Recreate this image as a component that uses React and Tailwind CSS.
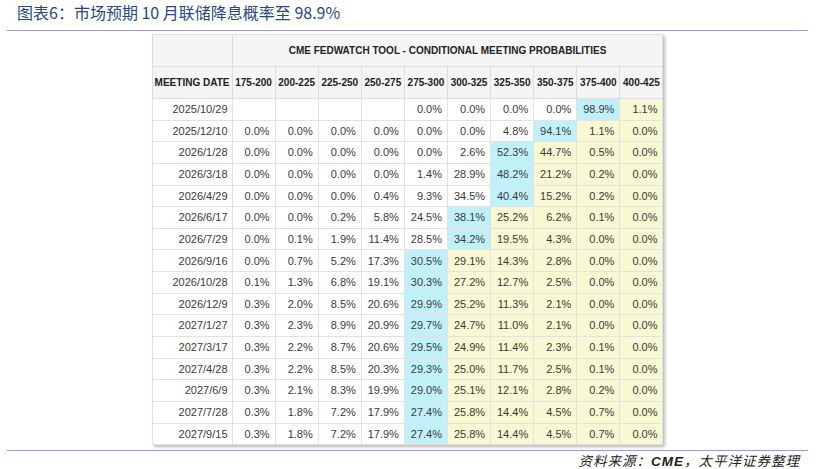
import React from "react";

const cols = ["175-200","200-225","225-250","250-275","275-300","300-325","325-350","350-375","375-400","400-425"];

const rows = [
  ["2025/10/29", ["","","","","0.0%","0.0%","0.0%","0.0%","98.9%","1.1%"], 8],
  ["2025/12/10", ["0.0%","0.0%","0.0%","0.0%","0.0%","0.0%","4.8%","94.1%","1.1%","0.0%"], 7],
  ["2026/1/28", ["0.0%","0.0%","0.0%","0.0%","0.0%","2.6%","52.3%","44.7%","0.5%","0.0%"], 6],
  ["2026/3/18", ["0.0%","0.0%","0.0%","0.0%","1.4%","28.9%","48.2%","21.2%","0.2%","0.0%"], 6],
  ["2026/4/29", ["0.0%","0.0%","0.0%","0.4%","9.3%","34.5%","40.4%","15.2%","0.2%","0.0%"], 6],
  ["2026/6/17", ["0.0%","0.0%","0.2%","5.8%","24.5%","38.1%","25.2%","6.2%","0.1%","0.0%"], 5],
  ["2026/7/29", ["0.0%","0.1%","1.9%","11.4%","28.5%","34.2%","19.5%","4.3%","0.0%","0.0%"], 5],
  ["2026/9/16", ["0.0%","0.7%","5.2%","17.3%","30.5%","29.1%","14.3%","2.8%","0.0%","0.0%"], 4],
  ["2026/10/28", ["0.1%","1.3%","6.8%","19.1%","30.3%","27.2%","12.7%","2.5%","0.0%","0.0%"], 4],
  ["2026/12/9", ["0.3%","2.0%","8.5%","20.6%","29.9%","25.2%","11.3%","2.1%","0.0%","0.0%"], 4],
  ["2027/1/27", ["0.3%","2.3%","8.9%","20.9%","29.7%","24.7%","11.0%","2.1%","0.0%","0.0%"], 4],
  ["2027/3/17", ["0.3%","2.2%","8.7%","20.6%","29.5%","24.9%","11.4%","2.3%","0.1%","0.0%"], 4],
  ["2027/4/28", ["0.3%","2.2%","8.5%","20.3%","29.3%","25.0%","11.7%","2.5%","0.1%","0.0%"], 4],
  ["2027/6/9", ["0.3%","2.1%","8.3%","19.9%","29.0%","25.1%","12.1%","2.8%","0.2%","0.0%"], 4],
  ["2027/7/28", ["0.3%","1.8%","7.2%","17.9%","27.4%","25.8%","14.4%","4.5%","0.7%","0.0%"], 4],
  ["2027/9/15", ["0.3%","1.8%","7.2%","17.9%","27.4%","25.8%","14.4%","4.5%","0.7%","0.0%"], 4],
];

function cellBg(i, hi) {
  if (i === hi) return "bg-[#c0f1fb]";
  if (i > hi) return "bg-[#f8f8d3]";
  return "bg-white";
}

export default function App() {
  return (
    <div className="w-[829px] h-[469px] overflow-hidden bg-white pl-[7px] pr-[21px] flex flex-col" style={{ fontFamily: '"Liberation Sans", Arial, sans-serif' }}>
      <div className="shrink-0 h-[31px] border-b-[1.5px] border-[#9b9bd0] flex items-center pl-[10px] pb-[6px]">
        <span className="text-[16px] text-[#2a4878] leading-none" style={{ fontFamily: '"Noto Sans CJK SC", "Noto Sans", sans-serif' }}>
          图表6：市场预期 10 月联储降息概率至 98.9%
        </span>
      </div>
      <div className="shrink-0 flex justify-center pt-[3px]">
        <table className="table-fixed border-collapse w-[511px] shadow-[2px_2px_3px_rgba(0,0,0,0.28)] text-[#3a3a3a]">
          <colgroup>
            <col className="w-[80px]" />
            {cols.map((c) => (
              <col key={c} className="w-[43.1px]" />
            ))}
          </colgroup>
          <thead>
            <tr className="h-[32px] bg-[#f5f5f5]">
              <th className="border border-[#dedede]"></th>
              <th colSpan={10} className="border border-[#dedede] text-[10px] font-bold text-[#222] text-center">
                CME FEDWATCH TOOL - CONDITIONAL MEETING PROBABILITIES
              </th>
            </tr>
            <tr className="h-[32px] bg-[#f5f5f5]">
              <th className="border border-[#dedede] text-[10px] font-bold text-[#222] text-center whitespace-nowrap px-0">MEETING DATE</th>
              {cols.map((c) => (
                <th key={c} className="border border-[#dedede] text-[10px] font-bold text-[#222] text-center whitespace-nowrap px-0">{c}</th>
              ))}
            </tr>
          </thead>
          <tbody>
            {rows.map(([d, vals, hi]) => (
              <tr key={d} className="h-[21.65px]">
                <td className="border border-[#e2e2e2] bg-white text-[11px] text-right pr-[4px] py-0">{d}</td>
                {vals.map((v, i) => (
                  <td key={i} className={`border border-[#e2e2e2] text-[11px] text-right pr-[5px] py-0 ${cellBg(i, hi)}`}>{v}</td>
                ))}
              </tr>
            ))}
          </tbody>
        </table>
      </div>
      <div className="shrink-0 mt-[5px] border-t-[1.5px] border-[#9b9bd0] flex justify-end pr-[8px] pt-[2px]">
        <span className="text-[13.5px] leading-[15px] italic text-[#222] tracking-[1px]" style={{ fontFamily: '"Noto Sans CJK SC", "Liberation Sans", sans-serif' }}>
          资料来源：<span className="font-bold" style={{ fontFamily: '"Liberation Sans", sans-serif' }}>CME</span>，太平洋证券整理
        </span>
      </div>
    </div>
  );
}
